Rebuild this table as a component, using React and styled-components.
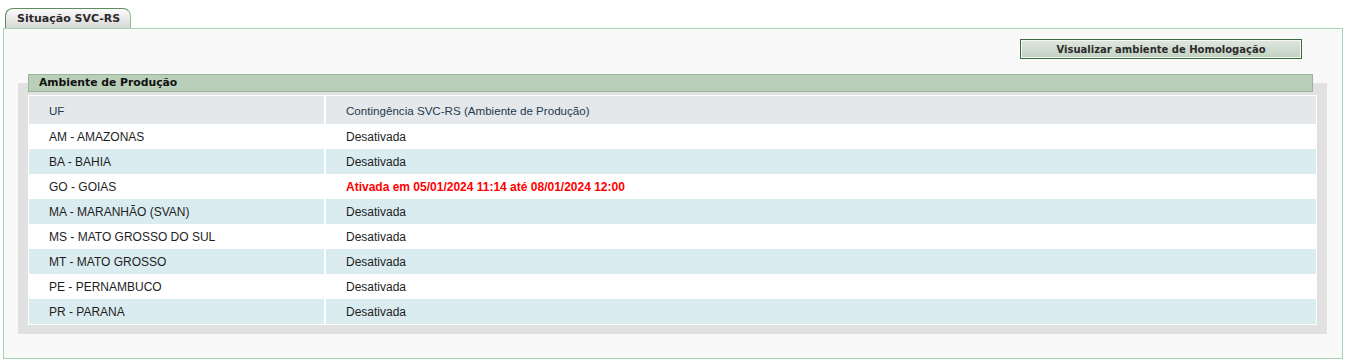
import React from 'react';
import styled, { createGlobalStyle } from 'styled-components';

const GlobalStyle = createGlobalStyle`
    body {
        margin: 0;
        background: #ffffff;
        font-family: "Liberation Sans", Arial, sans-serif;
    }
`;

const rows = [
    { uf: 'AM - AMAZONAS', status: 'Desativada' },
    { uf: 'BA - BAHIA', status: 'Desativada' },
    { uf: 'GO - GOIAS', status: 'Ativada em 05/01/2024 11:14 até 08/01/2024 12:00', active: true },
    { uf: 'MA - MARANHÃO (SVAN)', status: 'Desativada' },
    { uf: 'MS - MATO GROSSO DO SUL', status: 'Desativada' },
    { uf: 'MT - MATO GROSSO', status: 'Desativada' },
    { uf: 'PE - PERNAMBUCO', status: 'Desativada' },
    { uf: 'PR - PARANA', status: 'Desativada' },
];

const App = () => {
    return (
        <Page>
            <GlobalStyle />
            <Tabs>
                <Tab>Situação SVC-RS</Tab>
            </Tabs>
            <Panel>
                <Actions>
                    <Button type="button">Visualizar ambiente de Homologação</Button>
                </Actions>
                <Box>
                    <BoxTitle>Ambiente de Produção</BoxTitle>
                    <Table>
                        <thead>
                            <tr>
                                <Th $first>UF</Th>
                                <Th>Contingência SVC-RS (Ambiente de Produção)</Th>
                            </tr>
                        </thead>
                        <tbody>
                            {rows.map((r, i) => (
                                <Row key={r.uf} $odd={i % 2 === 1}>
                                    <Td $first>{r.uf}</Td>
                                    <Td $active={r.active}>{r.status}</Td>
                                </Row>
                            ))}
                        </tbody>
                    </Table>
                </Box>
            </Panel>
        </Page>
    );
};

const Page = styled.div`
    padding: 8px 8px 0 3px;
`;

const Tabs = styled.div`
    display: flex;
    padding-left: 2px;
`;

const Tab = styled.div`
    height: 19px;
    width: 102px;
    padding: 0 11px;
    border: 1px solid #5d8d5d;
    border-right-color: #8dbd8d;
    border-bottom: none;
    border-radius: 8px 8px 0 0;
    background: linear-gradient(to bottom, #fbfbfb, #d8d8d8);
    font-family: "DejaVu Sans", Verdana, sans-serif;
    font-weight: bold;
    font-size: 11px;
    line-height: 20px;
    color: #2b2b2b;
    white-space: nowrap;
`;

const Panel = styled.div`
    height: 329px;
    border: 1px solid #a5d3b5;
    background: #f9f9f9;
`;

const Actions = styled.div`
    display: flex;
    justify-content: flex-end;
    padding: 10px 40px 0 0;
`;

const Button = styled.button`
    width: 282px;
    height: 20px;
    padding: 0;
    border: 1px solid #3c6a3c;
    box-shadow: inset 0 0 0 1px #f4f7f4;
    background: linear-gradient(to bottom, #dfe7df, #c2d1c2);
    font-family: "DejaVu Sans", Verdana, sans-serif;
    font-weight: bold;
    font-size: 10px;
    color: #2b2b2b;
    cursor: pointer;
`;

const Box = styled.div`
    display: flow-root;
    margin: 24px 15px 0 14px;
    padding: 0 10px 9px 10px;
    background: #e1e1e1;
`;

const BoxTitle = styled.div`
    margin: -9px 4px 0 0;
    height: 16px;
    padding-left: 10px;
    border: 1px solid #98b598;
    background: #b9cfb9;
    font-family: "DejaVu Sans", Verdana, sans-serif;
    font-weight: bold;
    font-size: 10.8px;
    line-height: 16px;
    color: #111;
`;

const Table = styled.table`
    width: 100%;
    margin-top: 3px;
    border-collapse: separate;
    border-spacing: 0;
    border: 1px solid #ffffff;
    background: #ffffff;
`;

const Th = styled.th`
    height: 28px;
    padding: 0 0 0 20px;
    text-align: left;
    font-weight: normal;
    font-size: 11.6px;
    color: #26394c;
    background: #e4e8eb;
    width: ${p => (p.$first ? '275px' : 'auto')};
    border-right: ${p => (p.$first ? '2px solid #ffffff' : 'none')};
`;

const Row = styled.tr`
    background: ${p => (p.$odd ? '#daecf0' : '#ffffff')};
`;

const Td = styled.td`
    height: 25px;
    padding: 0 0 0 20px;
    font-size: 12px;
    color: ${p => (p.$active ? '#ff0000' : '#1e1e1e')};
    font-weight: ${p => (p.$active ? 'bold' : 'normal')};
    border-right: ${p => (p.$first ? '2px solid #ffffff' : 'none')};
`;

export default App;
